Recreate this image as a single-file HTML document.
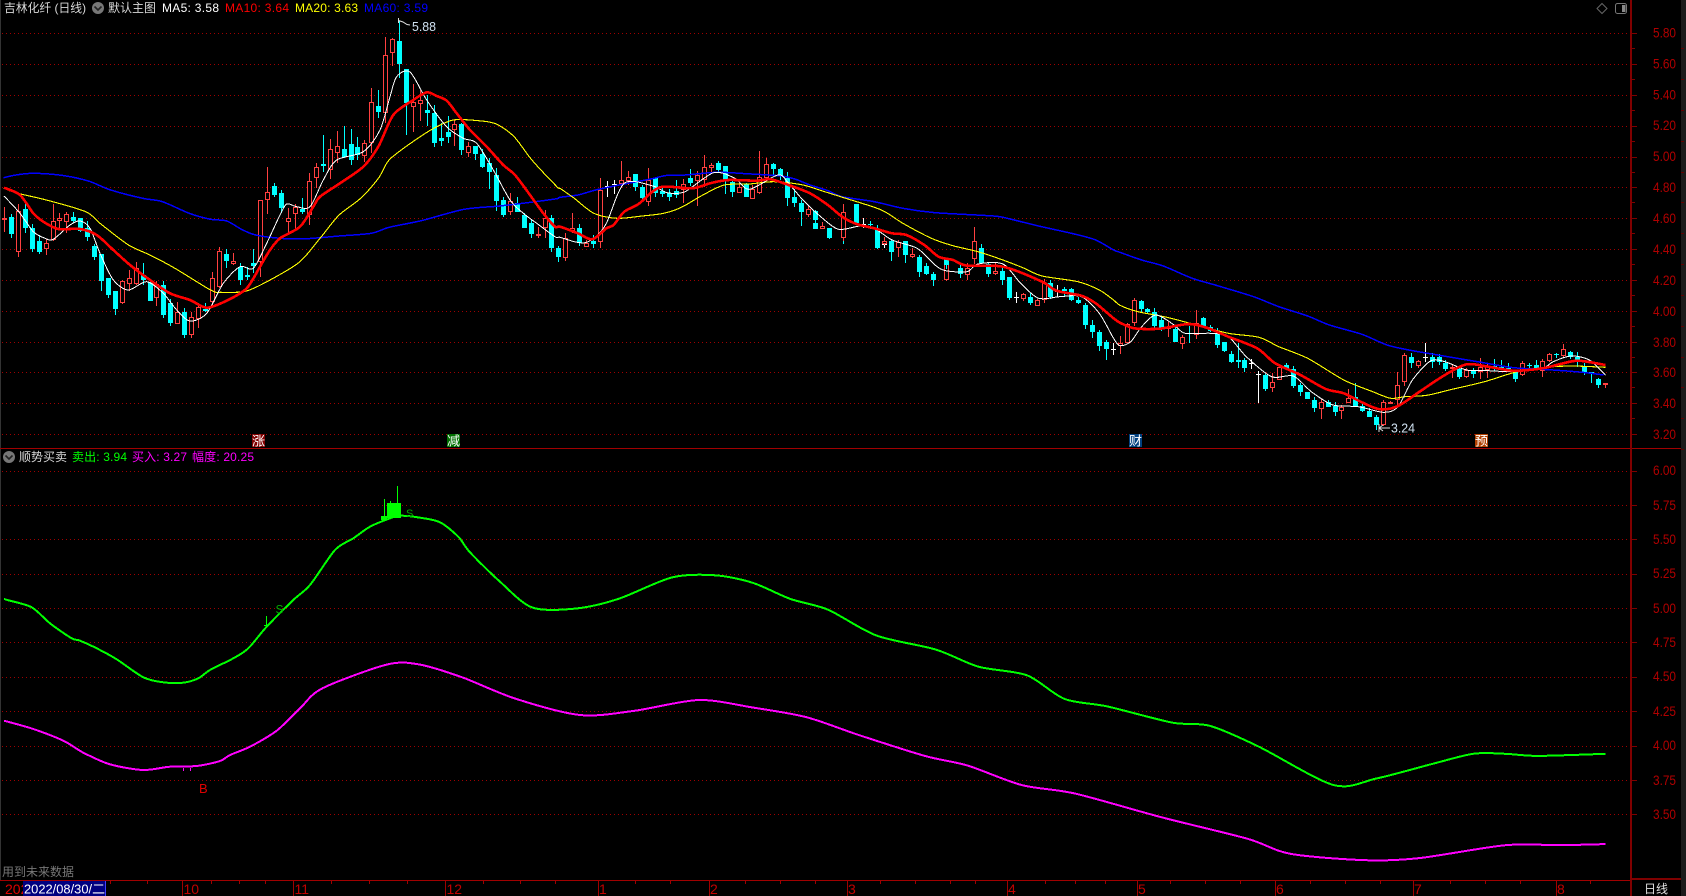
<!DOCTYPE html>
<html lang="zh">
<head>
<meta charset="utf-8">
<title>吉林化纤 (日线)</title>
<style>
html,body{margin:0;padding:0;background:#000;width:1686px;height:896px;overflow:hidden}
svg{display:block;position:absolute;left:0;top:0}
text{font-family:"Liberation Sans","Noto Sans CJK SC",sans-serif;font-size:12px;white-space:pre}
.ax{font-size:14px;fill:#b00000}
.xl{font-size:14px;fill:#c00000}
.mk{font-size:13px;fill:#fff}
</style>
</head>
<body>
<svg id="s" width="1686" height="896" viewBox="0 0 1686 896" xmlns="http://www.w3.org/2000/svg">
<rect width="1686" height="896" fill="#000"/>
<rect x="0" y="0" width="1" height="880" fill="#333"/>
<rect x="1681" y="0" width="5" height="896" fill="#1c1c1c"/>
<g id="grid" shape-rendering="crispEdges"></g>
<g id="candles" shape-rendering="crispEdges"></g>
<g id="lines" fill="none" shape-rendering="crispEdges"></g>
<g id="frame" shape-rendering="crispEdges">
<rect x="0" y="448" width="1681" height="1" fill="#a00000"/>
<rect x="0" y="880" width="1631" height="1" fill="#a00000"/>
<rect x="1631" y="878" width="50" height="2" fill="#800000"/>
<rect x="1630" y="0" width="2" height="896" fill="#800000"/>
</g>
<!-- header -->
<text x="4" y="12" textLength="82" lengthAdjust="spacingAndGlyphs" fill="#d8d8d8">吉林化纤 (日线)</text>
<circle cx="98" cy="8" r="6" fill="#777"/><path d="M94.5 6.5 L98 10 L101.5 6.5" fill="none" stroke="#222" stroke-width="1.6"/>
<text x="108" y="12" textLength="48" fill="#d8d8d8">默认主图</text>
<text x="162" y="12" textLength="57" fill="#fff">MA5: 3.58</text>
<text x="225" y="12" textLength="64" fill="#f00">MA10: 3.64</text>
<text x="295" y="12" textLength="63" fill="#ff0">MA20: 3.63</text>
<text x="364" y="12" textLength="64" fill="#00f">MA60: 3.59</text>
<path d="M1602 3.5 L1607 8.5 L1602 13.5 L1597 8.5 Z" fill="none" stroke="#666"/>
<rect x="1615.5" y="3.5" width="11" height="10" rx="2" fill="none" stroke="#777"/><rect x="1622" y="5" width="3.5" height="7" fill="#888"/>
<!-- annotations -->
<path d="M398.5 18 V23 M398.5 20.5 L403 22 L407 24.5 L410 25" fill="none" stroke="#ddd" stroke-width="1"/>
<text x="412" y="31" textLength="24" lengthAdjust="spacingAndGlyphs" fill="#cfe0f0" style="font-size:13px">5.88</text>
<path d="M1379 424 V432 M1379 428 H1390 M1379 428 L1383 425 M1379 428 L1383 431" fill="none" stroke="#ddd" stroke-width="1"/>
<text x="1391" y="432.500" textLength="24" lengthAdjust="spacingAndGlyphs" fill="#cfe0f0" style="font-size:13px">3.24</text>
<!-- event markers -->
<rect x="252" y="434" width="13" height="13" fill="#800000"/><text class="mk" x="252" y="445.500">涨</text>
<rect x="447" y="434" width="13" height="13" fill="#007000"/><text class="mk" x="447" y="445.500">减</text>
<rect x="1129" y="434" width="13" height="13" fill="#004080"/><text class="mk" x="1129" y="445.500">财</text>
<rect x="1475" y="434" width="13" height="13" fill="#b04000"/><text class="mk" x="1475" y="445.500">预</text>
<!-- lower header -->
<circle cx="9" cy="457" r="6" fill="#777"/><path d="M5.500 455.500 L9 459 L12.500 455.500" fill="none" stroke="#222" stroke-width="1.6"/>
<text x="19" y="461" textLength="48" fill="#d8d8d8">顺势买卖</text>
<text x="72" y="461" textLength="55" fill="#0f0">卖出: 3.94</text>
<text x="132" y="461" textLength="55" fill="#f0f">买入: 3.27</text>
<text x="192" y="461" textLength="62" fill="#f0f">幅度: 20.25</text>
<!-- lower signals -->
<g shape-rendering="crispEdges" fill="#0f0">
<rect x="387" y="503" width="14" height="15"/><rect x="397" y="486" width="1" height="18"/><rect x="384" y="499" width="1" height="19"/><rect x="381" y="516" width="6" height="4"/><rect x="390" y="501" width="1" height="3"/>
<rect x="266" y="616" width="1" height="12"/><rect x="264" y="625" width="5" height="1"/>
</g>
<g shape-rendering="crispEdges" fill="#f0f"><rect x="183" y="768" width="1" height="3"/><rect x="190" y="768" width="1" height="3"/></g>
<text x="406" y="517" fill="#0a0" style="font-size:11px">S</text>
<text x="275.500" y="613.500" fill="#0a0" style="font-size:12px">S</text>
<text x="199" y="793" fill="#e00000" style="font-size:13px">B</text>
<!-- y axis labels -->
<text class="ax" x="1653" y="37.500" textLength="23" lengthAdjust="spacingAndGlyphs">5.80</text>
<text class="ax" x="1653" y="68.500" textLength="23" lengthAdjust="spacingAndGlyphs">5.60</text>
<text class="ax" x="1653" y="99.500" textLength="23" lengthAdjust="spacingAndGlyphs">5.40</text>
<text class="ax" x="1653" y="130" textLength="23" lengthAdjust="spacingAndGlyphs">5.20</text>
<text class="ax" x="1653" y="161" textLength="23" lengthAdjust="spacingAndGlyphs">5.00</text>
<text class="ax" x="1653" y="192" textLength="23" lengthAdjust="spacingAndGlyphs">4.80</text>
<text class="ax" x="1653" y="223" textLength="23" lengthAdjust="spacingAndGlyphs">4.60</text>
<text class="ax" x="1653" y="254" textLength="23" lengthAdjust="spacingAndGlyphs">4.40</text>
<text class="ax" x="1653" y="285" textLength="23" lengthAdjust="spacingAndGlyphs">4.20</text>
<text class="ax" x="1653" y="316" textLength="23" lengthAdjust="spacingAndGlyphs">4.00</text>
<text class="ax" x="1653" y="347" textLength="23" lengthAdjust="spacingAndGlyphs">3.80</text>
<text class="ax" x="1653" y="377" textLength="23" lengthAdjust="spacingAndGlyphs">3.60</text>
<text class="ax" x="1653" y="408" textLength="23" lengthAdjust="spacingAndGlyphs">3.40</text>
<text class="ax" x="1653" y="439" textLength="23" lengthAdjust="spacingAndGlyphs">3.20</text>
<text class="ax" x="1653" y="475" textLength="23" lengthAdjust="spacingAndGlyphs">6.00</text>
<text class="ax" x="1653" y="510" textLength="23" lengthAdjust="spacingAndGlyphs">5.75</text>
<text class="ax" x="1653" y="544" textLength="23" lengthAdjust="spacingAndGlyphs">5.50</text>
<text class="ax" x="1653" y="578" textLength="23" lengthAdjust="spacingAndGlyphs">5.25</text>
<text class="ax" x="1653" y="613" textLength="23" lengthAdjust="spacingAndGlyphs">5.00</text>
<text class="ax" x="1653" y="647" textLength="23" lengthAdjust="spacingAndGlyphs">4.75</text>
<text class="ax" x="1653" y="681" textLength="23" lengthAdjust="spacingAndGlyphs">4.50</text>
<text class="ax" x="1653" y="716" textLength="23" lengthAdjust="spacingAndGlyphs">4.25</text>
<text class="ax" x="1653" y="750" textLength="23" lengthAdjust="spacingAndGlyphs">4.00</text>
<text class="ax" x="1653" y="785" textLength="23" lengthAdjust="spacingAndGlyphs">3.75</text>
<text class="ax" x="1653" y="819" textLength="23" lengthAdjust="spacingAndGlyphs">3.50</text>
<!-- bottom -->
<text x="2" y="876" textLength="72" fill="#777">用到未来数据</text>
<text x="5" y="894" fill="#e00000" style="font-size:14px">202</text>
<rect x="23" y="881" width="83" height="15" fill="#000080"/><rect x="105" y="881" width="1" height="15" fill="#4040ff"/>
<text x="24" y="893.500" textLength="81" lengthAdjust="spacingAndGlyphs" fill="#fff" style="font-size:13px">2022/08/30/二</text>
<text class="xl" x="183.500" y="894">10</text>
<text class="xl" x="294.500" y="894">11</text>
<text class="xl" x="446.500" y="894">12</text>
<text class="xl" x="599" y="894">1</text>
<text class="xl" x="710" y="894">2</text>
<text class="xl" x="848" y="894">3</text>
<text class="xl" x="1008" y="894">4</text>
<text class="xl" x="1138" y="894">5</text>
<text class="xl" x="1276" y="894">6</text>
<text class="xl" x="1414" y="894">7</text>
<text class="xl" x="1557" y="894">8</text>
<text x="1644" y="893" textLength="24" fill="#e0e0e0">日线</text>
</svg>
<script>
(function(){
var H=function(id,s){document.getElementById(id).insertAdjacentHTML('beforeend',s)};
/* grid */
var g='',i,y;
for(i=0;i<14;i++){y=Math.round(33.3+i*30.82);
 g+='<path d="M2 '+(y+.5)+'H1628" stroke="#a00000" stroke-dasharray="1 3" fill="none"/>';
 g+='<rect x="1632" y="'+y+'" width="5" height="1" fill="#800000"/>';
 if(i<13)g+='<rect x="1632" y="'+Math.round(y+15.4)+'" width="3" height="1" fill="#800000"/>';
 g+='<rect x="1681" y="'+Math.round(y+15.4)+'" width="3" height="1" fill="#600000"/>';
}
for(i=0;i<11;i++){y=Math.round(470.5+i*34.375);
 g+='<path d="M2 '+(y+.5)+'H1628" stroke="#a00000" stroke-dasharray="1 3" fill="none"/>';
 g+='<rect x="1632" y="'+y+'" width="5" height="1" fill="#800000"/>';
}
[182,293,445,598,709,847,1007,1137,1275,1413,1556].forEach(function(x){g+='<rect x="'+x+'" y="881" width="1" height="15" fill="#a00000"/>'});
[110,147,211,239,265,331,369,407,483,520,555,635,670,745,780,815,880,915,950,975,1045,1075,1105,1170,1205,1240,1310,1345,1380,1450,1485,1520,1590].forEach(function(x){g+='<rect x="'+x+'" y="881" width="1" height="3" fill="#a00000"/>'});
H('grid',g);
/* coordinate transforms for the source crops */
var Z={a:[function(x){return x/3},function(y){return 150+y/3}],
 b:[function(x){return 280+x/3},function(y){return 10+y/3}],
 c:[function(x){return 560+x/2.8},function(y){return 100+y/3}],
 d:[function(x){return 1120+x*.361},function(y){return 200+y/3}],
 e:[function(x){return x*.357},function(y){return y/3}],
 m:[function(x){return x*1.0753},function(y){return y*1.0753}],
 f:[function(x){return x/3},function(y){return 420+y/3}],
 g:[function(x){return x/3},function(y){return 600+y/3}]};
var R=0,C=1,W=2,out='';
function cand(k,rows){var fx=Z[k][0],fy=Z[k][1];rows.forEach(function(r){
 var idx=Math.round((fx(r[0])-4.5)/6.93),cx=Math.floor(4.5+6.93*idx),
 h=Math.round(fy(r[2])),a=Math.round(fy(r[3])),b=Math.round(fy(r[4])),l=Math.round(fy(r[5])),t=r[1];
 var col=t==R?'#ff4040':(t==C?'#00ffff':'#ffffff');
 if(b<=a)b=a+1;
 if(t==W){out+='<rect x="'+cx+'" y="'+h+'" width="1" height="'+(l-h)+'" fill="#fff"/><rect x="'+(cx-2)+'" y="'+a+'" width="5" height="1" fill="#fff"/>';return}
 if(a>h)out+='<rect x="'+cx+'" y="'+h+'" width="1" height="'+(a-h)+'" fill="'+col+'"/>';
 if(l>b)out+='<rect x="'+cx+'" y="'+b+'" width="1" height="'+(l-b)+'" fill="'+col+'"/>';
 if(t==C)out+='<rect x="'+(cx-2)+'" y="'+a+'" width="5" height="'+(b-a)+'" fill="'+col+'"/>';
 else out+='<rect x="'+(cx-1.5)+'" y="'+(a+.5)+'" width="4" height="'+Math.max(b-a-1,1)+'" fill="#000" stroke="'+col+'"/>';
})}
cand('a',[[13,R,170,203,206,245],[35,C,192,201,251,263],[55,R,163,183,305,320],[76,C,155,177,233,250],[97,C,222,234,297,305],[115,C,255,273,305,312],[136,R,268,280,298,315],[157,R,162,214,270,272],[178,R,190,205,212,240],[199,R,185,193,215,250],[220,C,187,201,214,220],[241,C,205,205,243,245],[262,C,213,235,260,272],[283,C,282,288,320,330],[304,C,312,312,393,423],[322,C,384,384,435,445],[343,C,423,423,477,495],[364,R,390,392,460,462],[385,R,360,385,401,422],[406,R,335,355,402,405],[427,C,338,375,389,405],[448,C,393,395,452,453],[469,R,393,402,443,467],[490,C,392,405,495,505],[511,C,448,458,518,527],[532,R,455,487,521,523],[550,C,473,486,555,563],[571,R,485,502,556,563],[592,R,460,470,507,535],[613,C,460,476,483,485],[634,R,367,385,455,475],[655,R,292,304,410,415],[676,C,297,312,332,355],[697,R,310,334,341,345],[718,C,340,350,390,405],[739,C,350,376,381,390],[757,C,298,340,347,370],[778,R,150,150,335,380],[799,R,52,127,151,192],[820,C,100,108,134,140]]);
cand('b',[[5,C,540,550,595,610],[23,R,595,625,635,672],[43,R,582,590,613,660],[64,C,565,597,605,612],[85,R,490,513,615,645],[106,R,458,472,505,535],[125,C,375,462,467,485],[146,R,388,418,480,508],[167,R,363,408,428,460],[187,C,348,418,442,445],[208,C,357,403,450,465],[229,C,382,411,435,450],[250,R,390,400,437,455],[271,R,235,275,400,430],[292,C,240,288,305,325],[313,R,80,136,310,340],[331,R,85,88,130,168],[352,C,33,93,161,205],[373,C,178,178,278,375],[394,R,222,275,290,365],[415,R,240,270,283,332],[436,C,255,300,308,348],[457,C,285,310,398,410],[478,C,340,384,392,408],[499,C,318,366,381,398],[520,R,330,343,361,408],[541,C,340,342,420,435],[559,R,395,408,430,442],[580,C,408,408,432,450],[601,C,418,432,472,475],[622,C,445,458,486,537],[643,C,475,495,573,603],[664,C,560,570,615,622],[685,R,550,574,605,615],[706,C,562,580,605,606],[727,C,610,615,653,655],[748,C,630,640,672,685],[767,R,650,672,678,685],[787,R,600,625,655,685],[808,C,615,625,715,727]]);
cand('e',[[1558,C,738,745,770,785]]);
cand('c',[[10,R,400,413,473,483],[29,R,340,385,393,400],[49,C,372,385,430,437],[68,R,420,430,440,442],[88,C,405,422,431,443],[108,R,235,270,425,443],[124,W,243,258,260,290],[144,W,240,252,254,282],[164,R,183,241,251,260],[183,R,213,232,244,255],[203,C,222,222,262,272],[223,C,255,262,294,302],[242,R,205,240,305,317],[262,C,232,233,278,290],[281,C,262,272,281,290],[301,C,268,278,290,302],[318,C,240,273,285,295],[337,R,237,253,270,308],[357,C,208,235,250,258],[377,R,213,225,243,318],[396,R,165,202,240,260],[416,R,190,194,203,215],[435,C,183,189,210,215],[455,C,198,198,243,283],[475,C,240,247,276,290],[494,R,250,262,278,280],[514,C,250,252,291,292],[533,R,255,267,297,298],[550,R,153,232,278,282],[570,R,175,193,233,240],[589,C,190,193,207,225],[609,C,203,208,228,240],[629,C,215,235,294,318],[648,C,268,292,309,320],[667,C,300,310,335,378],[687,R,315,327,345,352],[707,C,330,333,360,378],[724,C,360,368,387,388],[743,R,365,379,386,387],[763,C,384,385,414,418],[783,C,390,402,411,432],[802,R,312,335,413,423],[822,C,312,312,368,372],[841,W,355,372,374,385],[861,C,362,373,376,388],[881,C,375,387,443,447],[900,W,423,431,433,443],[917,R,412,422,431,435],[937,C,420,424,456,483],[956,R,420,425,445,470],[976,C,423,423,465,488],[995,R,445,463,472,474],[1015,C,465,472,516,530],[1035,C,490,498,522,526],[1054,C,515,522,541,557],[1074,R,485,490,541,542],[1093,C,473,475,495,508],[1113,C,490,505,513,525],[1130,C,505,514,521,533],[1149,R,488,503,524,540],[1169,R,380,424,476,492],[1189,C,433,445,490,492],[1208,C,485,492,522,530],[1228,R,490,514,523,524],[1248,C,505,513,540,555],[1267,C,530,532,595,600],[1287,W,575,592,594,608],[1306,R,578,583,597,602],[1323,C,578,592,610,615],[1343,R,598,601,617,618],[1362,R,538,550,601,608],[1382,C,540,549,592,598],[1402,W,555,573,575,592],[1421,C,562,568,573,590],[1441,C,563,567,600,602],[1460,C,590,600,610,613],[1480,C,610,615,675,688],[1499,C,660,675,696,713],[1516,C,690,696,737,752],[1536,C,720,727,748,780],[1555,W,730,747,749,765]]);
cand('d',[[7,R,408,430,438,463],[26,R,370,372,428,430],[45,R,295,300,368,378],[65,C,300,303,328,338],[85,C,323,327,336,340],[104,C,325,335,378,385],[122,C,352,360,385,392],[141,R,365,380,388,410],[160,C,380,386,425,426],[179,R,405,412,431,447],[198,C,378,398,403,428],[217,R,330,370,405,418],[237,C,352,353,382,385],[256,C,375,380,392,396],[276,C,385,398,435,443],[295,C,425,427,453,456],[315,C,452,462,485,490],[334,C,428,480,485,505],[351,C,475,480,503,515],[370,W,478,490,492,507],[388,W,512,523,525,608],[408,C,522,526,567,572],[428,R,518,547,565,575],[447,R,495,500,539,540],[466,C,490,495,507,510],[485,C,498,508,557,565],[505,C,548,555,576,588],[525,C,575,577,596,598],[542,C,590,600,624,635],[561,R,598,606,628,656],[580,C,600,605,620,622],[600,C,605,617,636,647],[619,R,616,622,634,656],[639,R,568,593,608,610],[658,C,548,592,618,620],[677,C,610,618,632,636],[697,C,625,633,650,652],[716,C,645,652,674,690],[733,R,600,607,676,677],[752,R,602,606,610,612],[771,R,517,556,600,615],[791,R,458,466,545,557],[810,C,458,471,490,505],[830,R,480,482,497,505],[849,W,428,470,472,487],[868,C,458,472,485,503],[888,C,462,472,485,495],[907,C,480,488,508,513],[925,R,495,500,505,535],[943,C,500,508,531,537],[962,R,505,510,532,533],[981,C,505,514,522,535],[1001,R,475,500,516,537],[1021,R,490,497,510,535],[1040,C,478,497,503,512],[1059,C,480,500,507,510],[1078,C,490,503,508,510],[1098,C,510,516,537,545],[1117,R,483,490,526,528],[1135,C,488,495,498,505],[1154,C,480,495,503,510],[1173,R,478,482,514,530],[1192,R,460,463,482,485],[1212,C,458,461,464,475],[1231,R,432,448,468,475],[1251,C,452,456,472,478],[1270,C,457,470,484,500],[1290,C,490,502,516,525],[1309,C,515,517,522,548],[1326,C,533,538,554,563],[1345,R,550,550,556,563]]);
H('candles',out);
/* lines */
function pts(parts){var a=[];parts.forEach(function(p){var fx=Z[p[0]][0],fy=Z[p[0]][1],q=p[1];for(var i=0;i<q.length;i+=2)a.push([fx(q[i]),fy(q[i+1])])});return a}
function path(a){var d='M'+a[0][0].toFixed(1)+' '+a[0][1].toFixed(1);
 for(var i=0;i<a.length-1;i++){var p0=a[i-1]||a[i],p1=a[i],p2=a[i+1],p3=a[i+2]||p2,k=1/7;
  d+='C'+(p1[0]+(p2[0]-p0[0])*k).toFixed(1)+' '+(p1[1]+(p2[1]-p0[1])*k).toFixed(1)+' '+(p2[0]-(p3[0]-p1[0])*k).toFixed(1)+' '+(p2[1]-(p3[1]-p1[1])*k).toFixed(1)+' '+p2[0].toFixed(1)+' '+p2[1].toFixed(1)}
 return d}
function line(parts,col,w){return '<path d="'+path(pts(parts))+'" stroke="'+col+'" stroke-width="'+w+'"/>'}
var L='';
L+=line([['e',[10,533,50,524,100,520,180,527,250,544,310,570,400,595,455,605,530,640,590,658,635,663,680,690,720,706,800,716,860,716,950,708,1040,700,1090,682,1180,662,1300,628,1400,618,1500,605,1560,596]],['c',[0,292,50,285,100,270,180,252,250,238,300,226,350,225,440,217,520,221,620,228,660,238,700,255,750,272,790,290,880,305,960,325,1050,338,1200,347,1240,352,1340,378,1440,402,1500,420,1550,450]],['d',[0,157,60,180,120,198,200,235,270,257,370,290,440,320,520,348,580,375,670,403,740,435,800,450,880,465,1000,487,1090,503,1200,510,1280,517,1340,525]]],'#0000ff',1.5);
L+=line([['e',[10,565,50,580,130,600,240,635,280,670,360,735,420,765,490,805,590,870,620,877,690,873,760,838,840,785,900,710,950,645,1010,595,1060,535,1090,480,1150,430,1210,388,1270,360,1340,362,1390,372,1440,410,1490,480,1560,560]],['c',[0,265,40,295,95,340,160,355,230,348,290,340,340,322,400,285,460,255,530,252,600,245,680,255,750,278,800,295,900,330,960,370,1040,415,1100,437,1170,455,1240,480,1300,505,1350,528,1450,545,1510,570,1550,600]],['d',[0,316,50,335,130,352,230,380,300,400,385,412,440,440,520,475,620,540,700,575,750,595,790,590,850,586,920,568,1010,545,1100,515,1180,502,1250,498,1345,502]]],'#ffff00',1.1);
L+=line([['a',[12,138,60,190,100,245,135,265,160,268,210,225,240,213,270,235,300,310,340,390,385,420,440,395,490,430,530,480,570,513,620,490,670,400,720,350,760,355,800,280]],['b',[0,615,20,582,50,590,90,590,130,510,170,450,250,425,300,360,330,260,350,200,390,186,440,270,500,350,550,385,590,400,640,480,690,570,730,610,770,640,825,680]],['c',[0,412,40,425,70,428,100,410,130,370,180,250,260,258,300,278,350,275,430,218,490,235,530,268,610,225,640,250,680,300,730,350,780,388,840,378,880,385,930,420,1000,445,1050,495,1080,512,1140,515,1170,492,1240,492,1290,550,1340,595,1400,590,1460,590,1510,640,1550,715]],['d',[0,437,30,425,60,380,100,345,150,375,180,400,250,400,300,410,350,470,420,530,480,528,530,575,590,615,660,620,730,637,770,620,810,540,860,483,900,485,960,510,1020,512,1090,515,1170,505,1200,485,1250,468,1300,480,1345,525]]],'#ffffff',1);
L+=line([['a',[12,113,60,135,100,190,130,215,175,237,240,237,290,255,340,300,390,345,450,390,510,430,570,450,620,473,680,452,740,415,780,350,810,300]],['b',[0,685,60,650,100,590,120,560,180,520,250,470,295,410,340,315,400,270,440,247,470,258,500,272,530,310,570,360,620,410,670,465,705,495,750,555,790,610,825,650]],['c',[0,380,50,400,90,418,130,385,150,375,180,335,220,312,280,262,370,265,420,250,470,240,550,242,590,238,640,255,700,280,750,315,790,350,830,372,880,385,930,400,970,405,1020,435,1060,470,1100,480,1140,497,1240,500,1350,545,1390,572,1460,587,1500,610,1550,655]],['d',[0,368,40,385,110,386,190,372,240,383,300,410,380,445,430,490,500,525,570,567,620,580,670,607,720,628,770,618,830,575,900,525,960,493,1020,500,1090,512,1170,505,1220,492,1270,482,1345,495]]],'#ff0000',2.6);
L+=line([['f',[12,536]],['g',[22,0,95,22,150,70,215,115,240,122,300,150,350,178,430,232,490,247,550,248,595,235,630,210,700,175,745,145,800,80,880,0]],['f',[930,495,1005,390,1060,355,1110,320,1170,295,1200,287,1260,293,1320,307,1375,350,1410,397,1500,485]],['m',[495,565,535,566,575,557,625,537,665,535,700,542,735,557,770,567,815,591,870,604,910,620,955,628,990,650,1030,657,1090,672,1125,675,1170,694,1240,730,1280,724,1330,711,1370,701,1400,701,1430,703,1493,701]]],'#00ff00',2);
L+=line([['g',[12,362,100,387,190,422,250,458,330,493,430,510,510,500,590,498,660,483,690,465,750,440,830,392,900,325]],['m',[300,640,360,618,390,618,430,630,480,650,540,665,590,661,650,651,700,658,750,667,800,684,860,703,900,712,950,730,1000,738,1080,760,1160,780,1200,794,1270,800,1320,798,1400,786,1450,786,1493,785]]],'#ff00ff',2);
H('lines',L);
})();
</script>
</body>
</html>
